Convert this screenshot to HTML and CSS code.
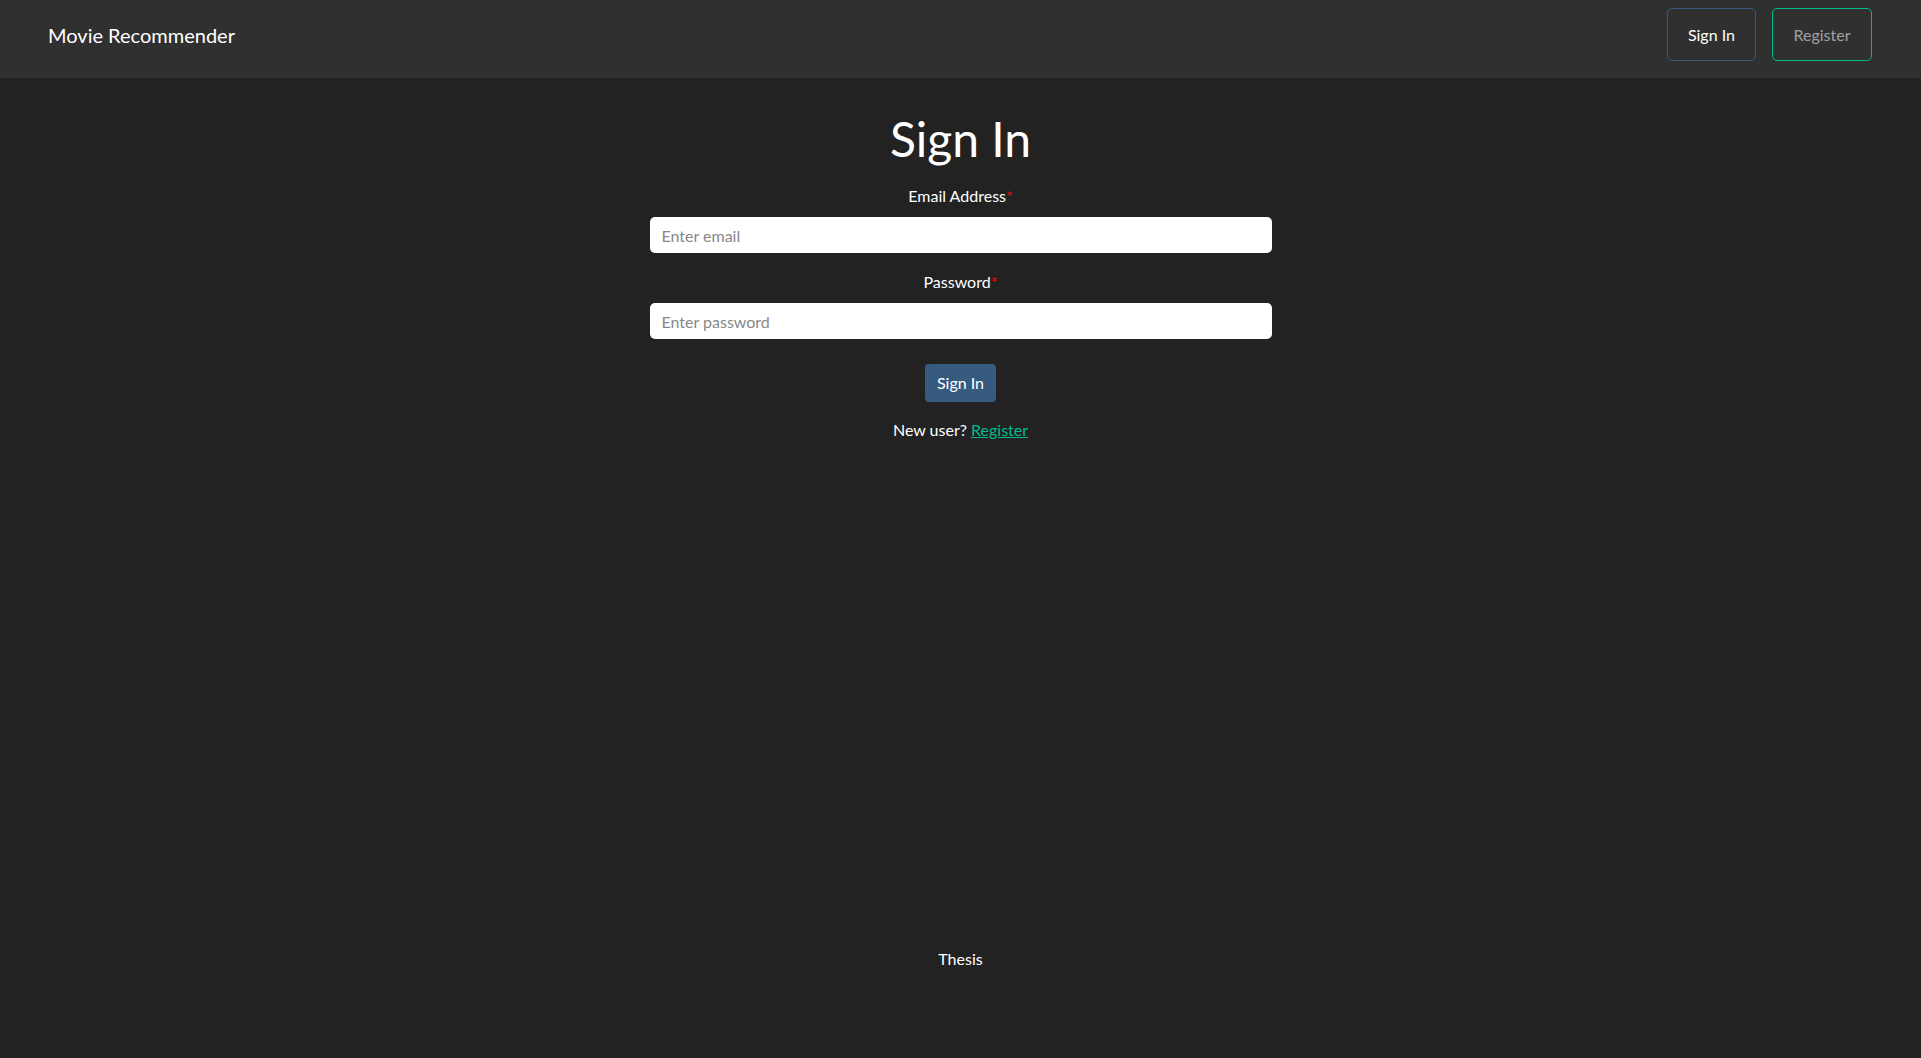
FILE: index.html
```html
<!DOCTYPE html>
<html lang="en">
<head>
<meta charset="utf-8">
<title>Movie Recommender - Sign In</title>
<link rel="stylesheet" href="styles.css">
</head>
<body>
<div class="page">
  <nav class="navbar">
    <a class="brand" href="#">Movie Recommender</a>
    <div class="nav-actions">
      <a class="nav-btn nav-btn-primary" href="#">Sign In</a>
      <a class="nav-btn nav-btn-success" href="#">Register</a>
    </div>
  </nav>
  <main class="main">
    <h1 class="title">Sign In</h1>
    <form class="form">
      <div class="group">
        <label class="label" for="email">Email Address<span class="req">*</span></label>
        <input class="input" id="email" type="email" placeholder="Enter email">
      </div>
      <div class="group">
        <label class="label" for="password">Password<span class="req">*</span></label>
        <input class="input" id="password" type="password" placeholder="Enter password">
      </div>
      <button class="submit" type="button">Sign In</button>
    </form>
    <p class="switch">New user? <a class="switch-link" href="#">Register</a></p>
  </main>
  <footer class="footer">Thesis</footer>
</div>
</body>
</html>
```
FILE: styles.css
```css
* { box-sizing: border-box; }
html, body { margin: 0; padding: 0; }
body {
  background: #222222;
  color: #ffffff;
  font-family: Lato, "Open Sans", "Liberation Sans", sans-serif;
  font-size: 16px;
  line-height: 1.5;
}
.page {
  min-height: 100vh;
  display: flex;
  flex-direction: column;
}
.navbar {
  background: #303030;
  height: 78px;
  padding: 8px 49px 17px 48px;
  display: flex;
  align-items: center;
  justify-content: space-between;
}
.brand {
  color: #ffffff;
  text-decoration: none;
  font-size: 20px;
  line-height: 30px;
}
.nav-actions {
  display: flex;
  gap: 16px;
}
.nav-btn {
  display: block;
  text-decoration: none;
  font-size: 16px;
  line-height: 24px;
  padding: 13.5px 20px;
  border: 1px solid;
  border-radius: 5px;
}
.nav-btn-primary {
  color: #ffffff;
  border-color: #375a7f;
}
.nav-btn-success {
  color: #a0a0a0;
  border-color: #00bc8c;
  padding-left: 20.5px;
  padding-right: 20.5px;
}
.main {
  flex: 1;
  display: flex;
  flex-direction: column;
  align-items: center;
  padding-top: 32px;
}
.title {
  margin: 0;
  font-size: 48px;
  font-weight: 400;
  line-height: 1.2;
}
.form {
  width: 622px;
  margin-top: 16px;
  display: flex;
  flex-direction: column;
  align-items: center;
}
.group {
  width: 100%;
  display: flex;
  flex-direction: column;
  align-items: center;
  margin-bottom: 16.5px;
}
.group + .group { margin-bottom: 25px; }
.label {
  display: block;
  line-height: 24px;
  margin-bottom: 9.5px;
}
.req { color: #ff0000; }
.input {
  width: 100%;
  height: 36px;
  border: 0;
  border-radius: 5px;
  background: #ffffff;
  color: #222;
  font-family: inherit;
  font-size: 16px;
  padding: 0 12px;
  outline: none;
}
.input::placeholder { color: #888888; }
.submit {
  background: #375a7f;
  color: #ffffff;
  border: 0;
  border-radius: 4px;
  font-family: inherit;
  font-size: 16px;
  line-height: 24px;
  padding: 7px 12px;
  cursor: pointer;
}
.switch {
  margin: 16px 0 0;
  line-height: 24px;
}
.switch-link {
  color: #00bc8c;
  text-decoration: underline;
}
.footer {
  text-align: center;
  line-height: 24px;
  padding-bottom: 87px;
}
```
